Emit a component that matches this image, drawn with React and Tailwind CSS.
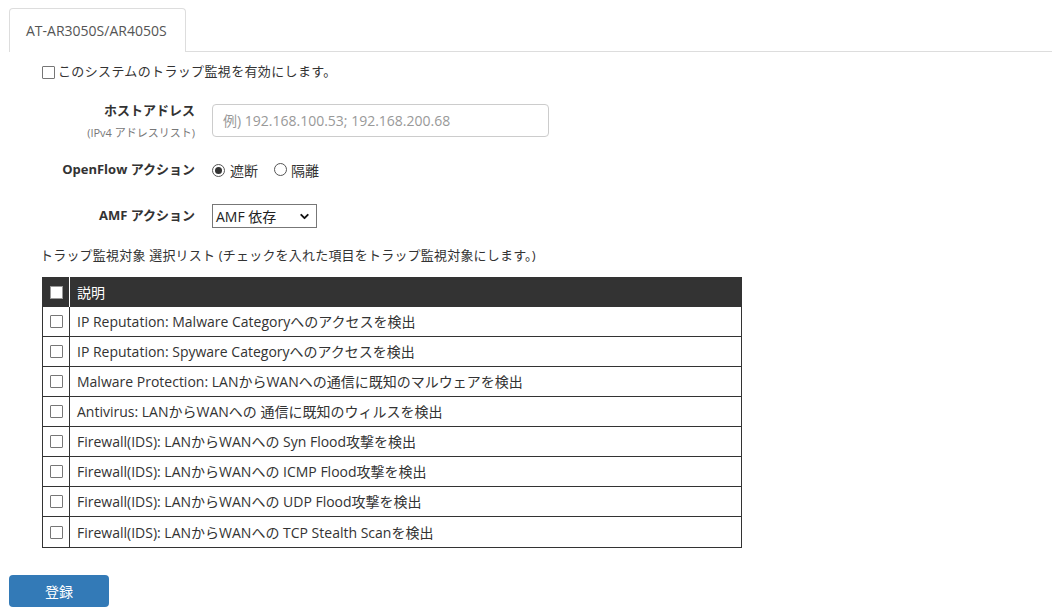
import React from 'react';
import { ChevronDown } from 'lucide-react';

const font = { fontFamily: '"Open Sans", "Noto Sans CJK JP", sans-serif' };

const rules = [
  'IP Reputation: Malware Categoryへのアクセスを検出',
  'IP Reputation: Spyware Categoryへのアクセスを検出',
  'Malware Protection: LANからWANへの通信に既知のマルウェアを検出',
  'Antivirus: LANからWANへの 通信に既知のウィルスを検出',
  'Firewall(IDS): LANからWANへの Syn Flood攻撃を検出',
  'Firewall(IDS): LANからWANへの ICMP Flood攻撃を検出',
  'Firewall(IDS): LANからWANへの UDP Flood攻撃を検出',
  'Firewall(IDS): LANからWANへの TCP Stealth Scanを検出',
];

const Box = () => (
  <span className="inline-block w-[13px] h-[13px] border border-[#767676] bg-white rounded-[1px] flex-shrink-0" />
);

const Radio = ({ checked }) => (
  <span className="inline-flex items-center justify-center w-[13px] h-[13px] rounded-full border border-[#555] bg-white flex-shrink-0">
    {checked && <span className="w-[7px] h-[7px] rounded-full bg-[#333]" />}
  </span>
);

const App = () => {
  return (
    <div className="w-[1060px] h-[616px] bg-white text-[#333] text-[13px] overflow-hidden" style={font}>
      {/* tabs */}
      <div className="flex pt-[8px] pl-[9px] pr-[8px]">
        <div className="w-[177px] h-[44px] border border-[#ddd] border-b-0 rounded-t-[4px] flex items-center pl-[16px] text-[14px] text-[#555]">
          AT-AR3050S/AR4050S
        </div>
        <div className="flex-1 border-b border-[#ddd]" />
      </div>

      <div className="pl-[40px]">
        <label className="mt-[10px] h-[20px] flex items-center gap-[3px] pl-[2px] tracking-[0.35px]">
          <Box />
          <span>このシステムのトラップ監視を有効にします。</span>
        </label>

        {/* host address */}
        <div className="mt-[18px] flex">
          <div className="w-[155px] text-right">
            <div className="h-[20px] leading-[20px] font-bold">ホストアドレス</div>
            <div className="mt-[5px] h-[16px] leading-[16px] text-[11px] text-[#777]">(IPv4 アドレスリスト)</div>
          </div>
          <div className="ml-[17px] mt-[4px] w-[337px] h-[33px] border border-[#ccc] rounded-[4px] flex items-center px-[10px] text-[14px] text-[#999]">
            例) 192.168.100.53; 192.168.200.68
          </div>
        </div>

        {/* openflow */}
        <div className="mt-[19px] flex items-center h-[20px]">
          <div className="w-[155px] text-right font-bold">OpenFlow アクション</div>
          <div className="ml-[17px] flex items-center text-[14px]">
            <Radio checked />
            <span className="ml-[5px]">遮断</span>
            <span className="ml-[16px]"><Radio /></span>
            <span className="ml-[4px]">隔離</span>
          </div>
        </div>

        {/* amf */}
        <div className="mt-[24px] flex items-center h-[24px]">
          <div className="w-[155px] text-right font-bold">AMF アクション</div>
          <div className="ml-[17px] w-[105px] h-[24px] border border-[#777] flex items-center justify-between pl-[3px] pr-[5px] text-[14px] text-[#222]">
            <span>AMF 依存</span>
            <ChevronDown size={13} strokeWidth={3.5} className="text-[#111]" />
          </div>
        </div>

        <div className="mt-[17px] h-[20px] leading-[20px] tracking-[0.2px]">
          トラップ監視対象 選択リスト (チェックを入れた項目をトラップ監視対象にします。)
        </div>

        {/* table */}
        <div className="mt-[12px] ml-[2px] w-[700px] border border-t-0 border-[#333] text-[14px]">
          <div className="flex h-[30px] bg-[#333] text-white">
            <div className="w-[27px] flex items-center justify-center border-r border-white">
              <span className="inline-block w-[13px] h-[13px] bg-white border border-[#999]" />
            </div>
            <div className="flex items-center pl-[7px]">説明</div>
          </div>
          {rules.map((r, i) => (
            <div key={i} className={`flex h-[30px] ${i < rules.length - 1 ? 'border-b border-[#333]' : ''}`}>
              <div className="w-[27px] flex items-center justify-center border-r border-[#333]">
                <Box />
              </div>
              <div className="flex items-center pl-[7px]">{r}</div>
            </div>
          ))}
        </div>
      </div>

      <button className="mt-[27px] ml-[9px] w-[100px] h-[32px] rounded-[4px] bg-[#337ab7] text-white text-[14px] flex items-center justify-center" style={font}>
        登録
      </button>
    </div>
  );
};

export default App;
